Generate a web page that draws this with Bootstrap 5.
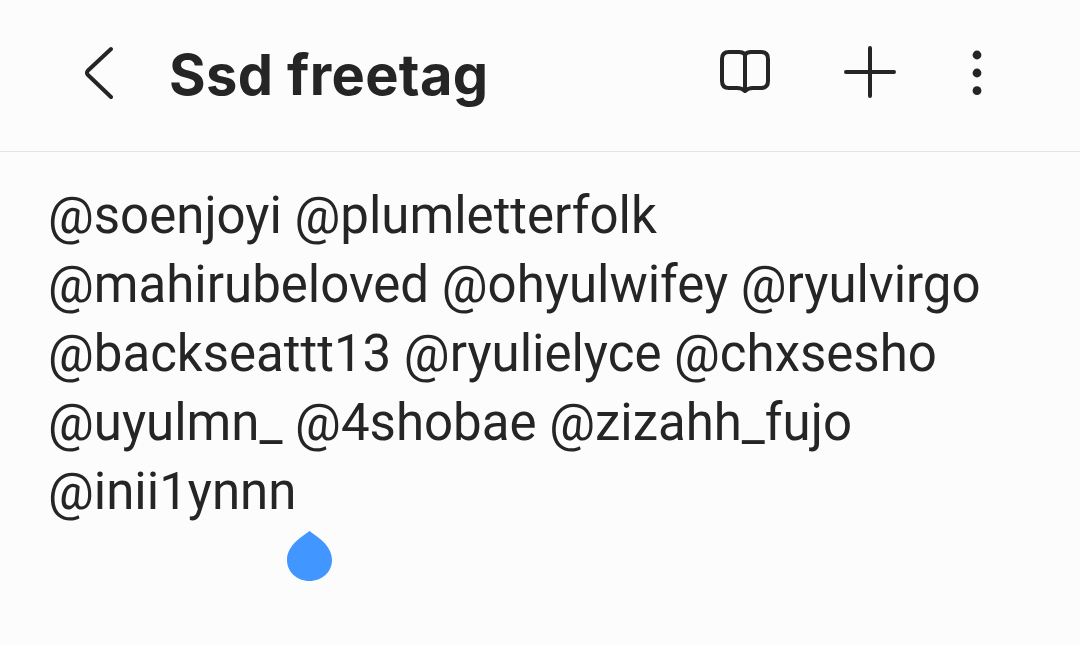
<!DOCTYPE html>
<html lang="en">
<head>
<meta charset="utf-8">
<meta name="viewport" content="width=device-width, initial-scale=1">
<title>Ssd freetag</title>
<link href="https://cdn.jsdelivr.net/npm/bootstrap@5.3.0/dist/css/bootstrap.min.css" rel="stylesheet">
<style>
body { background: #fcfcfc; color: #252525; min-height: 645px; overflow: hidden; }
.note-bar { height: 152px; border-bottom: 1px solid #e4e4e4; padding: 0 98px 5px 84px; }
.note-bar .btn { color: inherit; }
.note-title { font: 700 56px/68px Inter, sans-serif; letter-spacing: .35px; margin-left: 55px; padding-top: 3px; white-space: nowrap; }
.tools { gap: 73px; }
.more-btn { margin-left: 3px; }
.tool-icon { display: block; fill: none; stroke: currentColor; stroke-width: 4; stroke-linecap: round; stroke-linejoin: round; }
.note-text { font: 400 51px/69px Roboto, sans-serif; padding: 29px 0 0 48px; white-space: nowrap; }
.caret-handle { left: 286px; top: 531px; }
</style>
</head>
<body class="position-relative">
<header class="note-bar d-flex align-items-center">
  <button class="btn p-0 border-0" aria-label="Back">
    <svg class="tool-icon" width="30" height="54" viewBox="0 0 30 54"><path d="M27 3 4 24.500Q2 27 4 29L27 51"/></svg>
  </button>
  <h1 class="note-title mb-0">Ssd freetag</h1>
  <div class="tools d-flex align-items-center ms-auto">
    <button class="btn p-0 border-0" aria-label="Reading mode">
      <svg class="tool-icon" width="52" height="54" viewBox="0 0 52 54"><path d="M26 8.500Q24 6 20 6H10Q3 6 3 13V35Q3 42 10 42H18Q23 42 26 45Q29 42 34 42H42Q49 42 49 35V13Q49 6 42 6H32Q28 6 26 8.500V45"/></svg>
    </button>
    <button class="btn p-0 border-0" aria-label="Add">
      <svg class="tool-icon" width="52" height="54" viewBox="0 0 52 54"><path d="M26 2V50M2 26H50"/></svg>
    </button>
    <button class="more-btn btn p-0 border-0" aria-label="More options">
      <svg width="10" height="54" viewBox="0 0 10 54" class="d-block" fill="currentColor"><circle cx="5" cy="9" r="4.400"/><circle cx="5" cy="27" r="4.400"/><circle cx="5" cy="44.700" r="4.400"/></svg>
    </button>
  </div>
</header>
<main class="note-text">
  <div>@soenjoyi @plumletterfolk</div>
  <div>@mahirubeloved @ohyulwifey @ryulvirgo</div>
  <div>@backseattt13 @ryulielyce @chxsesho</div>
  <div>@uyulmn_ @4shobae @zizahh_fujo</div>
  <div>@inii1ynnn</div>
</main>
<svg class="caret-handle position-absolute" width="47" height="51" viewBox="0 0 47 51"><path d="M23.500 0C28 4 46 13 46 29C46 41 36 50 23.500 50C11 50 1 41 1 29C1 13 19 4 23.500 0Z" fill="#4296ff"/></svg>
<script src="https://cdn.jsdelivr.net/npm/bootstrap@5.3.0/dist/js/bootstrap.bundle.min.js"></script>
</body>
</html>
